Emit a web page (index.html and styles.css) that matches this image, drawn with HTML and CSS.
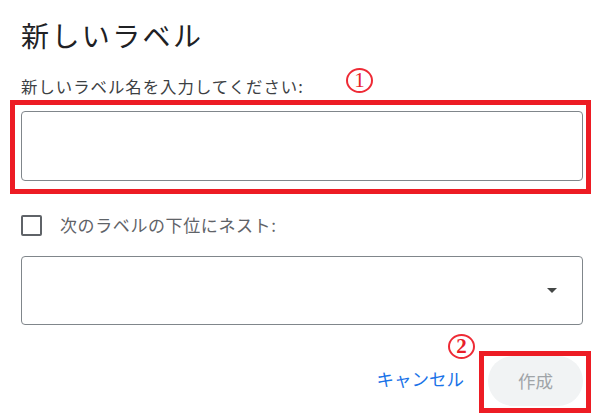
FILE: index.html
```html
<!DOCTYPE html>
<html lang="ja">
<head>
<meta charset="utf-8">
<title>新しいラベル</title>
<link rel="stylesheet" href="styles.css">
</head>
<body>
<div class="dialog">
  <h1 class="title">新しいラベル</h1>
  <label class="field-label" for="name">新しいラベル名を入力してください:</label>
  <div class="input" id="name"></div>
  <div class="check-row">
    <span class="checkbox"></span>
    <span class="check-text">次のラベルの下位にネスト:</span>
  </div>
  <div class="select"><span class="arrow"></span></div>
  <div class="actions">
    <button class="btn-cancel">キャンセル</button>
    <button class="btn-create">作成</button>
  </div>

  <div class="mark mark-box-1"></div>
  <div class="mark mark-box-2"></div>
  <span class="num num-1">1</span>
  <span class="num num-2">2</span>
</div>
</body>
</html>
```
FILE: styles.css
```css
html, body {
  margin: 0;
  padding: 0;
  background: #ffffff;
}

body {
  font-family: "Noto Sans CJK JP", "Noto Sans", sans-serif;
  color: #202124;
}

.dialog {
  position: relative;
  width: 604px;
  height: 418px;
  box-sizing: border-box;
  padding: 17px 21px 0 21px;
  display: flex;
  flex-direction: column;
}

.title {
  margin: 0;
  font-size: 28px;
  line-height: 36px;
  font-weight: 400;
  letter-spacing: 2.4px;
  color: #202124;
}

.field-label {
  margin-top: 21px;
  font-size: 16.4px;
  line-height: 24px;
  letter-spacing: 1px;
  color: #3c4043;
}

.input {
  margin-top: 13px;
  height: 70px;
  box-sizing: border-box;
  border: 1px solid #80868b;
  border-radius: 4px;
}

.check-row {
  margin-top: 33px;
  height: 22px;
  display: flex;
  align-items: center;
  gap: 18px;
}

.checkbox {
  width: 21px;
  height: 21px;
  box-sizing: border-box;
  border: 2px solid #5f6368;
  border-radius: 2px;
  flex: none;
}

.check-text {
  font-size: 17px;
  line-height: 22px;
  letter-spacing: 0.6px;
  color: #5f6368;
}

.select {
  margin-top: 20px;
  height: 69px;
  box-sizing: border-box;
  border: 1px solid #80868b;
  border-radius: 4px;
  display: flex;
  align-items: center;
  justify-content: flex-end;
  padding-right: 25px;
}

.arrow {
  width: 0;
  height: 0;
  border-left: 5px solid transparent;
  border-right: 5px solid transparent;
  border-top: 5px solid #444746;
}

.actions {
  margin-top: 31px;
  display: flex;
  justify-content: flex-end;
  align-items: center;
  gap: 24px;
}

.btn-cancel,
.btn-create {
  font-family: "Noto Sans CJK JP", "Noto Sans", sans-serif;
  border: 0;
  background: none;
  padding: 0;
  font-size: 17.5px;
  line-height: 24px;
}

.btn-cancel {
  color: #1a73e8;
  margin-top: -4px;
}

.btn-create {
  width: 95px;
  height: 50px;
  border-radius: 25px;
  background: #f1f3f4;
  color: #a0a4a8;
}

/* annotation overlays */
.mark {
  position: absolute;
  box-sizing: border-box;
  border: 5px solid #ed1c24;
}

.mark-box-1 {
  left: 10px;
  top: 100px;
  width: 581px;
  height: 94px;
}

.mark-box-2 {
  left: 479px;
  top: 351px;
  width: 112px;
  height: 62px;
}

.num {
  position: absolute;
  box-sizing: border-box;
  width: 27px;
  height: 25px;
  border: 2px solid #ee2a35;
  border-radius: 50%;
  color: #e8202a;
  font-family: "Liberation Serif", serif;
  font-size: 21px;
  line-height: 21px;
  text-align: center;
}

.num-1 {
  left: 346px;
  top: 68px;
}

.num-2 {
  left: 448px;
  top: 334px;
  font-weight: 700;
}
```
